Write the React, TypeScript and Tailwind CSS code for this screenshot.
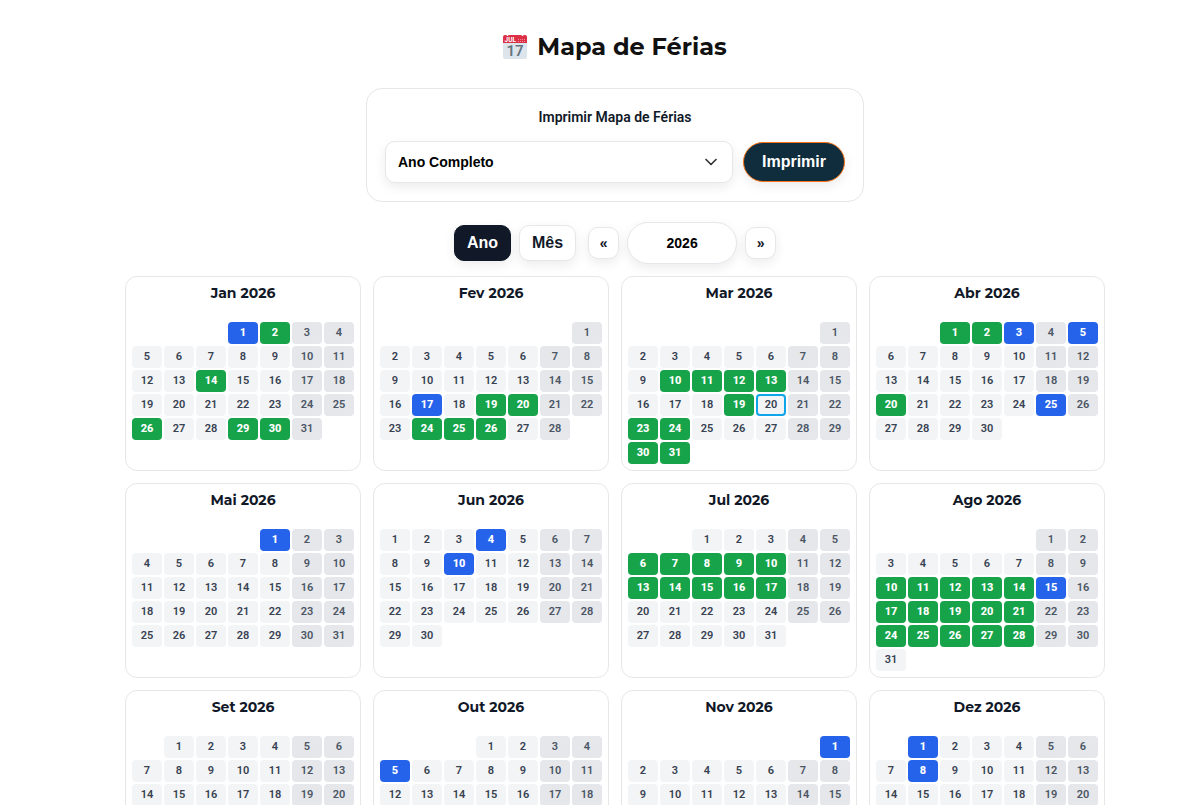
import { useState } from 'react'
import clsx from 'clsx'
import { ChevronDown } from 'lucide-react'

const MONTHS = ['Jan', 'Fev', 'Mar', 'Abr', 'Mai', 'Jun', 'Jul', 'Ago', 'Set', 'Out', 'Nov', 'Dez']

const TODAY = '2026-3-20'

// feriados por mês
const HOLIDAYS: Record<number, number[]> = {
  1: [1],
  2: [17],
  4: [3, 5, 25],
  5: [1],
  6: [4, 10],
  8: [15],
  10: [5],
  11: [1],
  12: [1, 8, 25],
}

// dias de férias marcados
const VACATIONS: Record<number, number[]> = {
  1: [2, 14, 26, 29, 30],
  2: [19, 20, 24, 25, 26],
  3: [10, 11, 12, 13, 19, 23, 24, 30, 31],
  4: [1, 2, 20],
  7: [6, 7, 8, 9, 10, 13, 14, 15, 16, 17],
  8: [10, 11, 12, 13, 14, 17, 18, 19, 20, 21, 24, 25, 26, 27, 28],
}

function CalendarIcon() {
  return (
    <svg viewBox="0 0 24 24" className="size-6 shrink-0" aria-hidden="true">
      <rect x="0" y="2" width="24" height="22" rx="2" fill="#dde5ec" />
      <path d="M0 8V2a2 2 0 0 1 2-2h1.500a1 1 0 0 0 2 0h13a1 1 0 0 0 2 0H22a2 2 0 0 1 2 2v6z" fill="#dc3046" />
      <text x="1.500" y="7" fontSize="6.500" fontWeight="700" fontFamily="Roboto, sans-serif" fill="#fff">
        JUL
      </text>
      <path d="M15 4.500h8M15 6.500h8" stroke="#f08a98" strokeWidth="1" strokeDasharray="1 1" />
      <text x="12" y="21" fontSize="15" fontWeight="600" textAnchor="middle" fontFamily="Roboto, sans-serif" fill="#66757f">
        17
      </text>
    </svg>
  )
}

function MonthCard({ year, month }: { year: number; month: number }) {
  const offset = (new Date(year, month - 1, 1).getDay() + 6) % 7
  const total = new Date(year, month, 0).getDate()

  return (
    <section className="rounded-xl border border-[#e5e7eb] bg-white p-1.5">
      <h2 className="mb-[19px] text-center font-['Montserrat','Inter',sans-serif] text-sm leading-5 font-bold text-[#111827]">
        {MONTHS[month - 1]} {year}
      </h2>
      <div className="grid grid-cols-7 gap-0.5">
        {Array.from({ length: offset }, (_, i) => (
          <span key={`e${i}`} />
        ))}
        {Array.from({ length: total }, (_, i) => {
          const day = i + 1
          const weekend = (offset + i) % 7 > 4
          const holiday = HOLIDAYS[month]?.includes(day)
          const vacation = VACATIONS[month]?.includes(day)
          return (
            <div
              key={day}
              className={clsx(
                'h-[22px] rounded text-center text-[11px] leading-[21px]',
                holiday && 'bg-[#2563eb] font-extrabold text-white',
                vacation && 'bg-[#16a34a] font-extrabold text-white',
                !holiday && !vacation && 'font-semibold',
                !holiday && !vacation && (weekend ? 'bg-[#e5e7eb] text-[#4b5563]' : 'bg-[#f3f4f6] text-[#374151]'),
                `${year}-${month}-${day}` === TODAY && 'outline-2 -outline-offset-2 outline-[#0ea5e9]',
              )}
            >
              {day}
            </div>
          )
        })}
      </div>
    </section>
  )
}

const control = "border font-['Liberation_Sans',Arial,sans-serif] font-bold shadow-[0_4px_12px_rgba(0,0,0,0.08)]"
const light = 'border-[#e5e7eb] bg-white'

export default function App() {
  const [year, setYear] = useState(2026)
  const [view, setView] = useState('ano')

  return (
    <main className="min-h-screen bg-white pt-8 pb-8 pl-[26px] font-['Roboto',sans-serif] text-[#111827]">
      <h1 className="flex items-center justify-center gap-2.5 font-['Montserrat','Inter',sans-serif] text-2xl leading-[30px] font-bold text-[#111111]">
        <CalendarIcon />
        Mapa de Férias
      </h1>

      <form
        className="mx-auto mt-[26px] max-w-[498px] rounded-2xl border border-[#e5e7eb] p-[18px]"
        onSubmit={(e) => e.preventDefault()}
      >
        <label htmlFor="periodo" className="block text-center text-sm leading-5 font-semibold">
          Imprimir Mapa de Férias
        </label>
        <div className="mt-3.5 flex items-center gap-2.5">
          <div className="relative flex-1">
            <select
              id="periodo"
              className={clsx(control, light, 'h-[42px] w-full appearance-none rounded-[10px] px-3 text-sm text-black')}
            >
              <option>Ano Completo</option>
              {MONTHS.map((m) => (
                <option key={m}>{m}</option>
              ))}
            </select>
            <ChevronDown size={20} className="pointer-events-none absolute top-[11px] right-3 text-[#333333]" />
          </div>
          <button
            type="submit"
            className={clsx(control, 'h-10 rounded-full border-[#f97316] bg-[#0f2d3d] px-[18px] text-base text-white')}
          >
            Imprimir
          </button>
        </div>
      </form>

      <div className="mt-5 flex items-center justify-center">
        <div className="flex gap-2">
          {[
            { id: 'ano', label: 'Ano' },
            { id: 'mes', label: 'Mês' },
          ].map((v) => (
            <button
              key={v.id}
              type="button"
              onClick={() => setView(v.id)}
              className={clsx(
                control,
                'h-9 rounded-[10px] px-3 text-base',
                view === v.id ? 'border-[#111827] bg-[#111827] text-white' : light,
              )}
            >
              {v.label}
            </button>
          ))}
        </div>
        <div className="ml-3 flex items-center gap-2">
          <button
            type="button"
            aria-label="Ano anterior"
            onClick={() => setYear(year - 1)}
            className={clsx(control, light, 'h-8 w-[31px] rounded-[10px] text-sm')}
          >
            «
          </button>
          <input
            aria-label="Ano"
            inputMode="numeric"
            value={year}
            onChange={(e) => setYear(Number(e.target.value) || 0)}
            className={clsx(control, light, 'h-[42px] w-[110px] rounded-full text-center text-sm text-black')}
          />
          <button
            type="button"
            aria-label="Ano seguinte"
            onClick={() => setYear(year + 1)}
            className={clsx(control, light, 'h-8 w-[31px] rounded-[10px] text-sm')}
          >
            »
          </button>
        </div>
      </div>

      <div className="mx-auto mt-3 grid max-w-[980px] grid-cols-2 gap-3 md:grid-cols-4">
        {MONTHS.map((m, i) => (
          <MonthCard key={m} year={year} month={i + 1} />
        ))}
      </div>
    </main>
  )
}
